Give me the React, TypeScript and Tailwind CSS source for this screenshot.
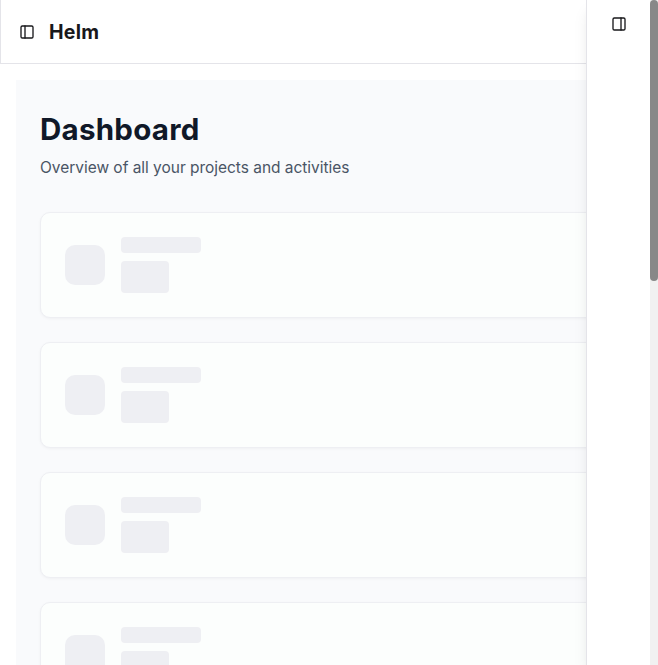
function PanelIcon({ right = false }: { right?: boolean }) {
  return (
    <svg className="block h-4 w-4" viewBox="0 0 24 24" fill="none" stroke="currentColor" strokeWidth="2" strokeLinecap="round" strokeLinejoin="round">
      <rect width="18" height="18" x="3" y="3" rx="2" />
      <path d={right ? "M15 3v18" : "M9 3v18"} />
    </svg>
  );
}

function SkeletonCard() {
  return (
    <div className="flex h-[106px] w-full shrink-0 items-center gap-4 rounded-[10px] border border-[#eeeff3] bg-[#fcfefd] px-6 shadow-[0_1px_3px_rgba(0,0,0,0.04)]">
      <div className="h-10 w-10 rounded-[10px] bg-[#eeeff3]" />
      <div className="flex flex-col gap-2">
        <div className="h-4 w-20 rounded bg-[#eeeff3]" />
        <div className="h-8 w-12 rounded bg-[#eeeff3]" />
      </div>
    </div>
  );
}

export default function App() {
  return (
    <div className="flex h-[665px] w-[658px] overflow-hidden bg-white font-['Inter',sans-serif]">
      <div className="flex w-[586px] shrink-0 flex-col overflow-hidden">
        <header className="flex h-16 shrink-0 items-center gap-[14px] border-b border-l border-[#e4e4e9] pl-[18px] text-[#18181b]">
          <PanelIcon />
          <h1 className="text-[19.5px] font-bold leading-7 tracking-[0.3px]">Helm</h1>
        </header>
        <main className="ml-4 mt-4 flex min-h-0 flex-1 flex-col bg-[#f9fafc] pl-6 pt-[31px]">
          <h2 className="text-[29.5px] font-bold leading-9 tracking-[0.25px] text-[#101828]">Dashboard</h2>
          <p className="mt-[9px] whitespace-nowrap text-[15.5px] font-normal leading-6 tracking-[-0.03px] text-[#4a5565]">
            Overview of all your projects and activities
          </p>
          <div className="mt-8 flex w-[620px] flex-col gap-6">
            <SkeletonCard />
            <SkeletonCard />
            <SkeletonCard />
            <SkeletonCard />
          </div>
        </main>
      </div>
      <aside className="z-10 flex w-16 shrink-0 justify-center border-l border-[#e4e4e9] bg-white pt-4 text-[#18181b] shadow-[0_10px_15px_-3px_rgba(0,0,0,0.1),0_4px_6px_-4px_rgba(0,0,0,0.1)]">
        <PanelIcon right />
      </aside>
      <div className="z-20 w-2 shrink-0 bg-[#f1f1f1]">
        <div className="h-[281px] rounded bg-[#888888]" />
      </div>
    </div>
  );
}
